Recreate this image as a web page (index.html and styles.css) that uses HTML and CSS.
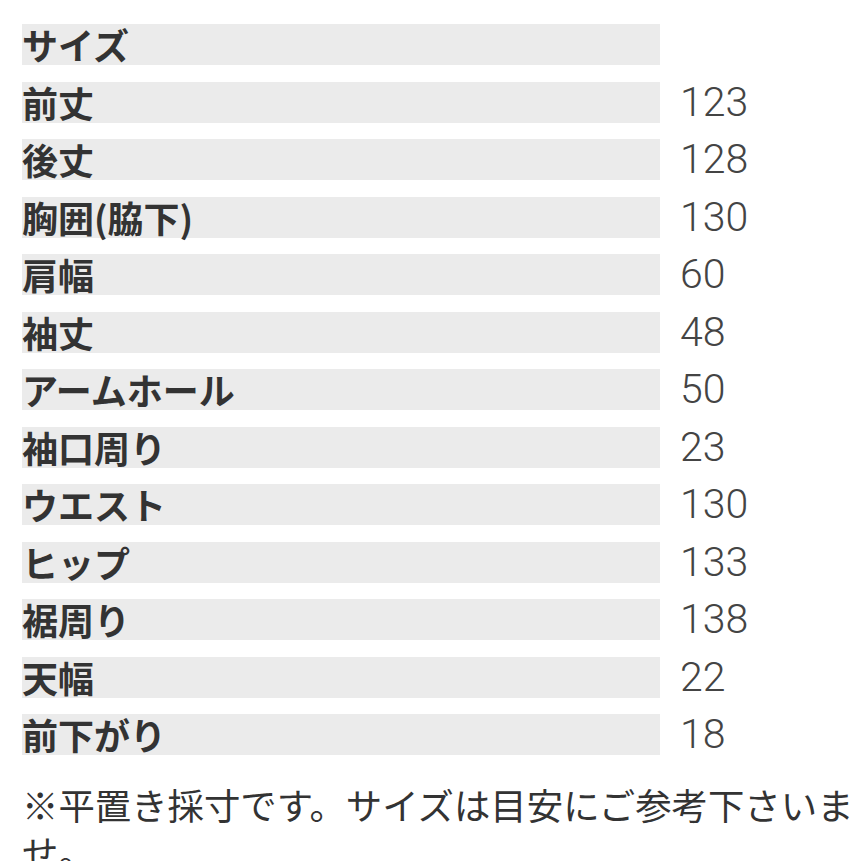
FILE: index.html
```html
<!DOCTYPE html>
<html lang="ja">
<head>
<meta charset="utf-8">
<link rel="stylesheet" href="styles.css">
</head>
<body>
<div class="page">
  <div class="table">
    <div class="label">サイズ</div><div class="value"></div>
    <div class="label">前丈</div><div class="value">123</div>
    <div class="label">後丈</div><div class="value">128</div>
    <div class="label">胸囲(脇下)</div><div class="value">130</div>
    <div class="label">肩幅</div><div class="value">60</div>
    <div class="label">袖丈</div><div class="value">48</div>
    <div class="label">アームホール</div><div class="value">50</div>
    <div class="label">袖口周り</div><div class="value">23</div>
    <div class="label">ウエスト</div><div class="value">130</div>
    <div class="label">ヒップ</div><div class="value">133</div>
    <div class="label">裾周り</div><div class="value">138</div>
    <div class="label">天幅</div><div class="value">22</div>
    <div class="label">前下がり</div><div class="value">18</div>
  </div>
  <p class="note">※平置き採寸です。サイズは目安にご参考下さいませ。</p>
</div>
</body>
</html>
```
FILE: styles.css
```css
html, body {
  margin: 0;
  padding: 0;
  background: #fff;
}
.page {
  padding: 24px 0 0 22px;
  font-family: "Noto Sans CJK JP", "Noto Sans", sans-serif;
  color: #333;
}
.table {
  display: grid;
  grid-template-columns: 638px 1fr;
  grid-auto-rows: 41px;
  column-gap: 20px;
  row-gap: 16.5px;
}
.label {
  background: #ebebeb;
  font-size: 36px;
  font-weight: 700;
  line-height: 40px;
  white-space: nowrap;
  color: #333;
}
.value {
  font-family: Roboto, "Liberation Sans", sans-serif;
  font-size: 41px;
  font-weight: 300;
  line-height: 41px;
  color: #444;
}
.note {
  margin: 26px 0 0 0;
  font-size: 36.4px;
  line-height: 47px;
  font-weight: 400;
  color: #333;
}
```
